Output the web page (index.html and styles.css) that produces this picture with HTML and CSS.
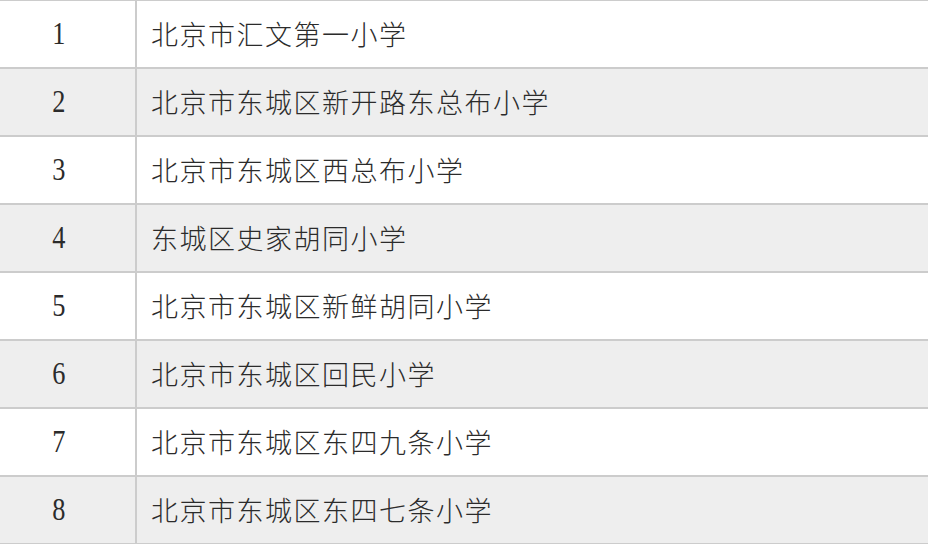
FILE: index.html
```html
<!DOCTYPE html>
<html lang="zh">
<head>
<meta charset="utf-8">
<link rel="stylesheet" href="styles.css">
</head>
<body>
<div class="table">
  <div class="row"><div class="num"><span class="digit">1</span></div><div class="name">北京市汇文第一小学</div></div>
  <div class="row alt"><div class="num"><span class="digit">2</span></div><div class="name">北京市东城区新开路东总布小学</div></div>
  <div class="row"><div class="num"><span class="digit">3</span></div><div class="name">北京市东城区西总布小学</div></div>
  <div class="row alt"><div class="num"><span class="digit">4</span></div><div class="name">东城区史家胡同小学</div></div>
  <div class="row"><div class="num"><span class="digit">5</span></div><div class="name">北京市东城区新鲜胡同小学</div></div>
  <div class="row alt"><div class="num"><span class="digit">6</span></div><div class="name">北京市东城区回民小学</div></div>
  <div class="row"><div class="num"><span class="digit">7</span></div><div class="name">北京市东城区东四九条小学</div></div>
  <div class="row alt"><div class="num"><span class="digit">8</span></div><div class="name">北京市东城区东四七条小学</div></div>
</div>
</body>
</html>
```
FILE: styles.css
```css
html, body {
  margin: 0;
  padding: 0;
  background: #fff;
}
.table {
  border-top: 1px solid #cccccc;
  color: #2b2b2b;
}
.row {
  display: flex;
  height: 66px;
  border-bottom: 2px solid #cccccc;
  background: #fff;
}
.row.alt {
  background: #eeeeee;
}
.num {
  width: 117px;
  padding-right: 18px;
  border-right: 2px solid #cccccc;
  display: flex;
  align-items: center;
  justify-content: center;
  font-family: "Liberation Serif", serif;
  font-size: 31px;
}
.digit {
  display: inline-block;
  transform: scaleX(0.85);
}
.name {
  flex: 1;
  display: flex;
  align-items: center;
  padding-left: 14px;
  padding-bottom: 2px;
  font-family: "Noto Sans CJK SC", sans-serif;
  font-weight: 300;
  font-size: 27px;
  letter-spacing: 1.5px;
}
```
